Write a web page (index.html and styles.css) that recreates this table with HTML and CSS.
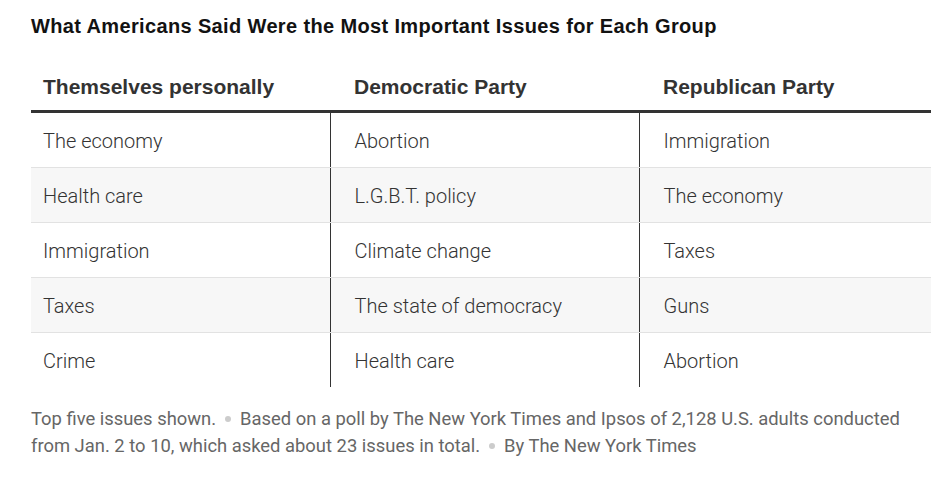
FILE: index.html
```html
<!DOCTYPE html>
<html>
<head>
<meta charset="utf-8">
<link rel="stylesheet" href="styles.css">
</head>
<body>
<div class="wrap">
  <h2 class="title">What Americans Said Were the Most Important Issues for Each Group</h2>
  <table class="issues">
    <colgroup>
      <col class="c1"><col class="c2"><col class="c3">
    </colgroup>
    <thead>
      <tr><th>Themselves personally</th><th>Democratic Party</th><th>Republican Party</th></tr>
    </thead>
    <tbody>
      <tr><td>The economy</td><td>Abortion</td><td>Immigration</td></tr>
      <tr class="alt"><td>Health care</td><td>L.G.B.T. policy</td><td>The economy</td></tr>
      <tr><td>Immigration</td><td>Climate change</td><td>Taxes</td></tr>
      <tr class="alt"><td>Taxes</td><td>The state of democracy</td><td>Guns</td></tr>
      <tr><td>Crime</td><td>Health care</td><td>Abortion</td></tr>
    </tbody>
  </table>
  <p class="notes">Top five issues shown.<span class="dot"></span>Based on a poll by The New York Times and Ipsos of 2,128 U.S. adults conducted from Jan. 2 to 10, which asked about 23 issues in total.<span class="dot"></span>By The New York Times</p>
</div>
</body>
</html>
```
FILE: styles.css
```css
html, body { margin: 0; padding: 0; background: #fff; }
.wrap { padding: 13px 8px 0 31px; width: 900px; font-family: "Liberation Sans", Arial, sans-serif; }
.title { margin: 0; font-size: 20px; font-weight: 700; color: #121212; line-height: 26px; letter-spacing: 0.36px; }
.issues { border-collapse: collapse; width: 900px; margin-top: 22px; table-layout: fixed; }
.c1 { width: 299px; }
.c2 { width: 309px; }
.c3 { width: 292px; }
.issues th { text-align: left; font-size: 21px; font-weight: 700; color: #333; height: 46px; padding: 3px 0 0 12px; vertical-align: middle; border-bottom: 3px solid #333; }
.issues th + th { padding-left: 24px; }
.issues td { font-family: Roboto, "Liberation Sans", sans-serif; font-weight: 300; font-size: 20px; color: #333; height: 53px; padding: 1px 0 0 12px; border-bottom: 1px solid #e2e2e2; vertical-align: middle; }
.issues td + td { padding-left: 24px; border-left: 1px solid #333; }
.issues tbody tr:last-child td { border-bottom: none; }
.issues tr.alt td { background: #f7f7f7; }
.notes { margin: 18px 0 0; width: 880px; font-family: Roboto, "Liberation Sans", sans-serif; font-weight: 400; font-size: 18.4px; line-height: 27px; color: #666; }
.dot { display: inline-block; width: 6px; height: 6px; border-radius: 50%; background: #ccc; margin: 0 9px; vertical-align: middle; position: relative; top: -1px; }
```
